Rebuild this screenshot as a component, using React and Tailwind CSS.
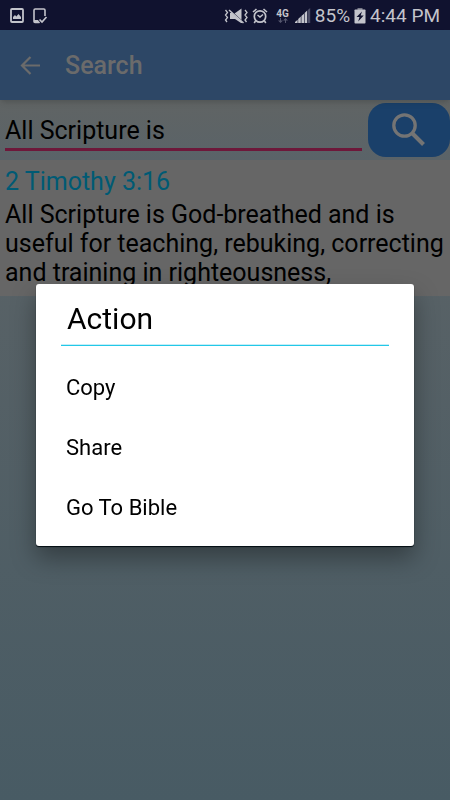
import { useState } from "react";

function ImageIcon() {
  return (
    <svg width="16" height="16" viewBox="0 0 16 16" aria-hidden="true">
      <rect x="3" y="1" width="12" height="13" rx="1" fill="none" stroke="currentColor" strokeWidth="1.800" />
      <path d="M5 11V9l2-2 1.300 1.400L10.500 6l2.500 3v2z" fill="currentColor" />
    </svg>
  );
}

function DeviceCheckIcon() {
  return (
    <svg width="16" height="16" viewBox="0 0 16 16" aria-hidden="true">
      <path d="M13 8V2.2Q13 1 11.800 1H3.200Q2 1 2 2.200V13.500Q2 14.500 3 14.500H7.500" fill="none" stroke="currentColor" strokeWidth="1.600" />
      <path d="M2 12h4l2 3H2z" fill="currentColor" />
      <path d="M7.500 11.500l2.500 2.500 4.500-5" fill="none" stroke="currentColor" strokeWidth="1.700" />
    </svg>
  );
}

function VibrateMuteIcon() {
  return (
    <svg width="24" height="16" viewBox="0 0 24 16" aria-hidden="true">
      <path d="M6 5h2l10 9v1h-1l-6-4H6z" fill="currentColor" />
      <path d="M10.500 5.500L17.500 0.500v11.500z" fill="currentColor" />
      <path d="M5 2L19.500 15" stroke="currentColor" strokeWidth="1.500" />
      <path d="M1.500 2l2 2.500-2 2.500 2 2.500-2 2.500 1.500 2M21 2l2 2.500-2 2.500 2 2.500-2 2.500 1.500 2" fill="none" stroke="currentColor" strokeWidth="1.300" />
    </svg>
  );
}

function AlarmIcon() {
  return (
    <svg width="16" height="16" viewBox="0 0 16 16" aria-hidden="true">
      <circle cx="8" cy="8.500" r="5.700" fill="none" stroke="currentColor" strokeWidth="1.700" />
      <path d="M1 4l3.500-3M15 4l-3.500-3M3.500 13l-1.300 2M12.500 13l1.300 2" stroke="currentColor" strokeWidth="1.600" />
      <path d="M5.500 7l2.500 2 3-2.500" fill="none" stroke="currentColor" strokeWidth="1.500" />
    </svg>
  );
}

function DataArrowsIcon() {
  return (
    <svg width="10" height="5" viewBox="0 0 10 5" aria-hidden="true" className="text-[#55576e]">
      <path d="M0 2.500h5L2.500 5zM2 0h1v3H2zM5 2.500L7.500 0 10 2.500zM7 2h1v3H7z" fill="currentColor" />
    </svg>
  );
}

function SignalIcon() {
  return (
    <svg width="16" height="16" viewBox="0 0 16 16" aria-hidden="true">
      <path d="M0 15v-1l2.600-2.300V15zM3.200 15v-4l2.600-2.500V15zM6.400 15V8L9 5.800V15zM9.600 15V5l2.600-2.400V15z" fill="currentColor" />
      <path d="M12.800 2l2.400-2v15h-2.400z" fill="#4b4d66" />
    </svg>
  );
}

function BatteryIcon() {
  return (
    <svg width="12" height="16" viewBox="0 0 12 16" aria-hidden="true">
      <path d="M3.500 0h5v2h-5z" fill="#777986" />
      <rect x="0.500" y="1.500" width="11" height="14" rx="0.800" fill="currentColor" />
      <path d="M8 3.500L2.500 9h3l-1.300 4.500L9.700 7.500h-3z" fill="#10122f" />
    </svg>
  );
}

function BackIcon() {
  return (
    <svg width="20" height="20" viewBox="0 0 20 20" aria-hidden="true">
      <path d="M20 9.500H2M10.500 1L2 9.500l8.500 8.500" fill="none" stroke="currentColor" strokeWidth="2.200" />
    </svg>
  );
}

function MagnifierIcon() {
  return (
    <svg width="34" height="34" viewBox="0 0 34 34" aria-hidden="true">
      <circle cx="12.500" cy="12.500" r="10.700" fill="none" stroke="currentColor" strokeWidth="3.300" />
      <path d="M20 20L31.500 31.500" stroke="currentColor" strokeWidth="4" />
    </svg>
  );
}

function StatusBar() {
  return (
    <div className="flex h-[30px] items-center justify-between bg-[#10122f] pt-0.5 pr-2.5 pl-2 text-[#c3c4cb]">
      <div className="flex gap-2">
        <ImageIcon />
        <DeviceCheckIcon />
      </div>
      <div className="flex items-center">
        <VibrateMuteIcon />
        <span className="ml-1">
          <AlarmIcon />
        </span>
        <div className="ml-2 flex flex-col items-center text-[10px] leading-[9px] font-bold">
          4G
          <DataArrowsIcon />
        </div>
        <span className="ml-1.5">
          <SignalIcon />
        </span>
        <span className="ml-1 text-[19px] leading-6">85%</span>
        <span className="mx-1">
          <BatteryIcon />
        </span>
        <span className="text-[19px] leading-6">4:44 PM</span>
      </div>
    </div>
  );
}

const actions = ["Copy", "Share", "Go To Bible"];

export default function App() {
  const [query, setQuery] = useState("All Scripture is");

  return (
    <div className="flex min-h-screen flex-col bg-linear-to-b from-[#606567] to-[#485b64] font-[Roboto,sans-serif] text-black">
      <StatusBar />

      <header className="z-10 flex h-[70px] items-center gap-[25px] bg-[#2d4766] px-5 pt-0.5 text-[#6b6b6b] shadow-md">
        <button type="button" aria-label="Back">
          <BackIcon />
        </button>
        <h1 className="text-[25px] font-medium">Search</h1>
      </header>

      <form className="flex h-[60px] items-center gap-1.5 bg-linear-to-b from-[#606464] to-[#5a6368] pl-[5px]" onSubmit={(e) => e.preventDefault()}>
        <input
          type="text"
          aria-label="Search text"
          value={query}
          onChange={(e) => setQuery(e.target.value)}
          className="h-[42px] min-w-0 flex-1 border-b-3 border-[#6d183a] bg-transparent pt-1 text-[25px] outline-none"
        />
        <button
          type="submit"
          aria-label="Search"
          className="flex h-[54px] w-[82px] items-center justify-center rounded-[18px] bg-[#1a406a] text-[#747474]"
        >
          <MagnifierIcon />
        </button>
      </form>

      <article className="bg-[#666666] px-[5px] pt-[7px] pb-[9px] text-[25px] leading-[29px]">
        <h2 className="mb-1 text-[#005a74]">2 Timothy 3:16</h2>
        <p>All Scripture is God-breathed and is useful for teaching, rebuking, correcting and training in righteousness,</p>
      </article>

      <div className="fixed inset-0 z-20 flex items-center justify-center px-9 pt-[30px]">
        <div
          role="dialog"
          aria-labelledby="action-title"
          className="w-full rounded-[3px] bg-white px-[25px] pt-2 pb-[9px] shadow-[0_1px_1px_#000a10,0_12px_24px_rgba(0,0,0,0.35)]"
        >
          <h2
            id="action-title"
            className="border-b border-[#22c8e8] px-1.5 pt-[9px] pb-2 text-[30px] leading-9 shadow-[inset_0_-1px_#c5eef7]"
          >
            Action
          </h2>
          <ul className="pt-[11px]">
            {actions.map((action) => (
              <li key={action}>
                <button type="button" className="flex h-[60px] w-full items-center px-[5px] text-[22px]">
                  {action}
                </button>
              </li>
            ))}
          </ul>
        </div>
      </div>
    </div>
  );
}
